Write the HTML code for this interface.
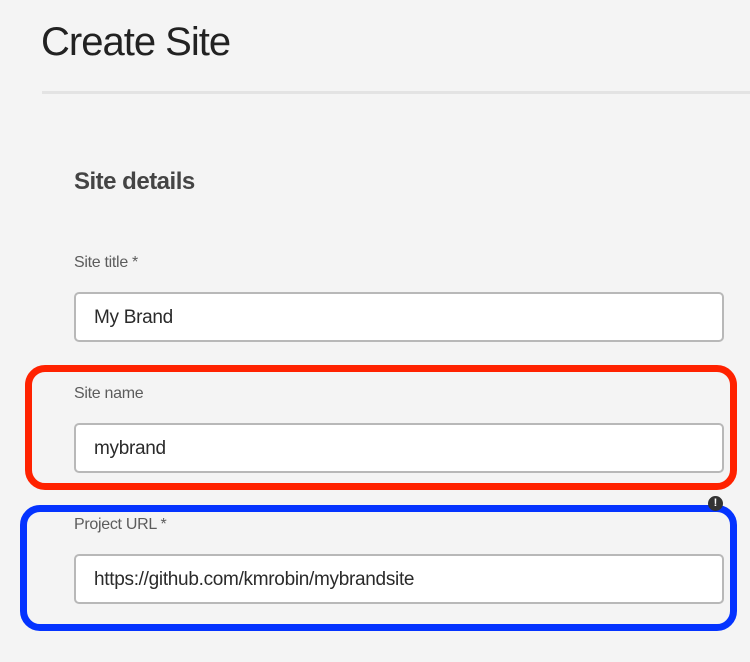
<!DOCTYPE html>
<html><head><style>
html,body{margin:0;padding:0;}
body{width:750px;height:662px;background:#f4f4f4;position:relative;overflow:hidden;font-family:"Liberation Sans",sans-serif;color:#2c2c2c;}
.a{position:absolute;}
h1{position:absolute;left:41px;top:20px;margin:0;font-weight:300;font-size:40px;color:#222;letter-spacing:-1px;}
.line{left:42px;top:91px;width:708px;height:3px;background:#e3e3e3;}
.h2{left:74px;top:168px;font-size:24px;font-weight:bold;color:#444;letter-spacing:-0.5px;}
.lab{left:74px;font-size:16px;color:#5c5c5c;letter-spacing:-0.3px;}
.inp{left:74px;width:646px;height:46px;background:#fff;border:2px solid #b8b8b8;border-radius:5px;}
.val{position:absolute;left:18px;top:13px;font-size:19px;color:#2a2a2a;letter-spacing:-0.3px;}
.box{border-radius:20px;}
</style></head><body>
<h1>Create Site</h1>
<div class="a line"></div>
<div class="a h2">Site details</div>
<div class="a lab" style="top:254px">Site title *</div>
<div class="a inp" style="top:292px"><span class="val">My Brand</span></div>
<div class="a box" style="left:25px;top:365px;width:698px;height:111px;border:7px solid #ff2200;"></div>
<div class="a lab" style="top:385px">Site name</div>
<div class="a inp" style="top:423px"><span class="val">mybrand</span></div>
<div class="a box" style="left:20px;top:505px;width:703px;height:112px;border:7px solid #0433ff;"></div>
<div class="a" style="left:708px;top:496px;width:15px;height:15px;border-radius:50%;background:#333;color:#fff;font-size:11px;font-weight:bold;text-align:center;line-height:15px;">!</div>
<div class="a lab" style="top:516px">Project URL *</div>
<div class="a inp" style="top:554px"><span class="val">https://github.com/kmrobin/mybrandsite</span></div>
</body></html>
